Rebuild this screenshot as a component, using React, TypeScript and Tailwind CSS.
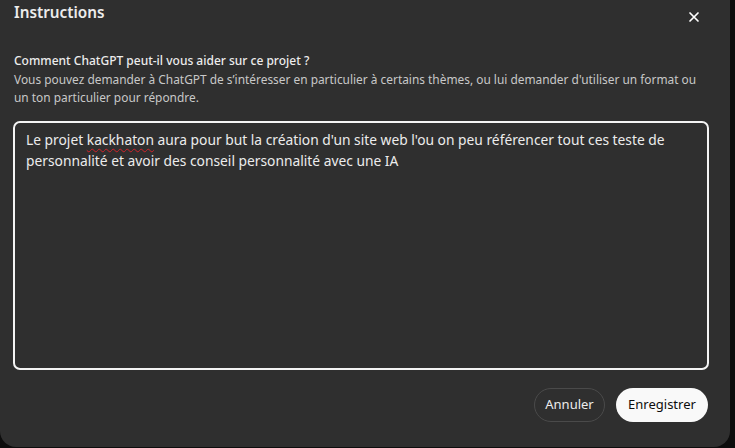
import React from "react";

export default function App() {
  return (
    <div className="w-[735px] h-[448px] bg-[#0d0d0d] flex overflow-hidden" style={{ fontFamily: '"Noto Sans", "Open Sans", sans-serif' }}>
      <div className="w-[730px] h-[447px] bg-[#2f2f2f] rounded-b-2xl flex flex-col pl-[13px] pr-[21px]">
        <div className="flex items-start justify-between">
          <div className="text-[15.3px] leading-[24px] font-semibold text-[#ececec] pl-[1px] mt-0">Instructions</div>
          <svg width="12" height="12" viewBox="0 0 12 12" className="mt-[11px] mr-[9px] text-white">
            <path d="M2 2 L10 10 M10 2 L2 10" stroke="currentColor" strokeWidth="1.7" strokeLinecap="round" />
          </svg>
        </div>
        <div className="mt-[28px] pl-[1px] text-[12px] leading-[18px] font-medium text-[#ececec]">Comment ChatGPT peut-il vous aider sur ce projet ?</div>
        <div className="pl-[1px] text-[11.9px] leading-[18px] text-[#c8c8c8]">
          Vous pouvez demander à ChatGPT de s’intéresser en particulier à certains thèmes, ou lui demander d'utiliser un format ou
          <br />
          un ton particulier pour répondre.
        </div>
        <div className="mt-[15px] h-[249px] border-2 border-[#f4f4f4] rounded-[7px] px-[11px] pt-[6px] text-[13.8px] leading-[21px] text-[#ececec]">
          Le projet <span className="underline decoration-wavy decoration-[#d0222a] decoration-1 underline-offset-[3px]">kackhaton</span> aura pour but la création d'un site web l'ou on peu référencer tout ces teste de
          <br />
          personnalité et avoir des conseil personnalité avec une IA
        </div>
        <div className="mt-[18px] flex justify-end gap-[11px] pr-[1px]">
          <button className="h-[34px] w-[71px] rounded-full border border-[#4a4a4a] text-[13px] text-[#ececec]">Annuler</button>
          <button className="h-[34px] w-[92px] rounded-full bg-[#f9f9f9] text-[13px] text-[#0d0d0d]">Enregistrer</button>
        </div>
      </div>
    </div>
  );
}
